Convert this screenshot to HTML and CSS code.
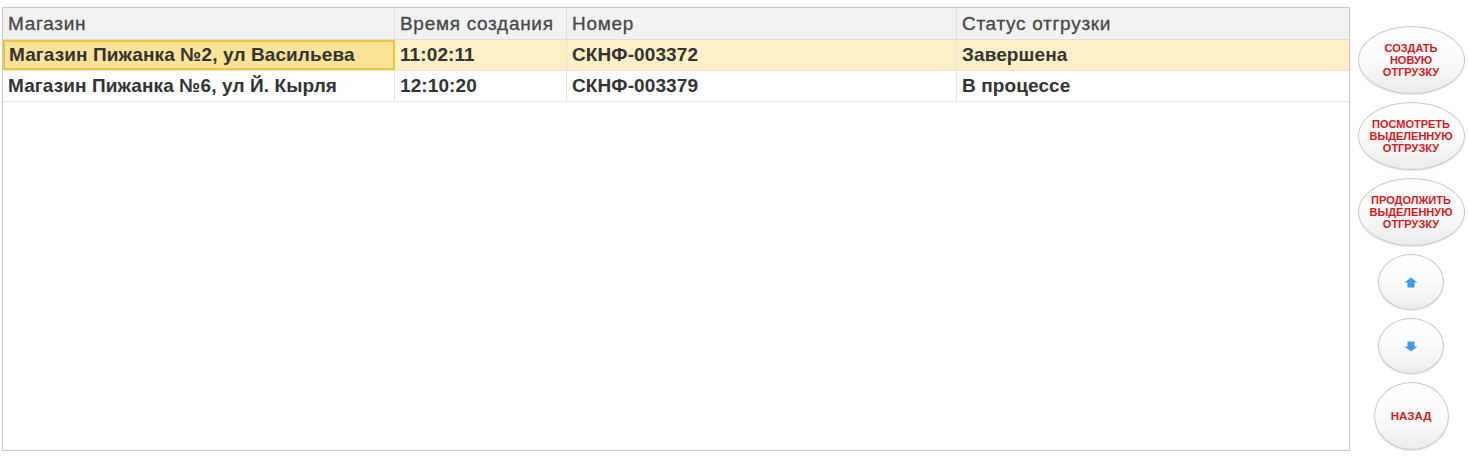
FILE: index.html
```html
<!DOCTYPE html>
<html lang="ru">
<head>
<meta charset="utf-8">
<link rel="stylesheet" href="styles.css">
</head>
<body>
<div class="page">
  <div class="grid">
    <div class="row head">
      <div class="cell c1">Магазин</div>
      <div class="cell c2">Время создания</div>
      <div class="cell c3">Номер</div>
      <div class="cell c4">Статус отгрузки</div>
    </div>
    <div class="row data selected">
      <div class="cell c1 focus">Магазин Пижанка №2, ул Васильева</div>
      <div class="cell c2">11:02:11</div>
      <div class="cell c3">СКНФ-003372</div>
      <div class="cell c4">Завершена</div>
    </div>
    <div class="row data">
      <div class="cell c1">Магазин Пижанка №6, ул Й. Кырля</div>
      <div class="cell c2">12:10:20</div>
      <div class="cell c3">СКНФ-003379</div>
      <div class="cell c4">В процессе</div>
    </div>
  </div>
  <div class="side">
    <button class="btn wide">СОЗДАТЬ<br>НОВУЮ<br>ОТГРУЗКУ</button>
    <button class="btn wide">ПОСМОТРЕТЬ<br>ВЫДЕЛЕННУЮ<br>ОТГРУЗКУ</button>
    <button class="btn wide">ПРОДОЛЖИТЬ<br>ВЫДЕЛЕННУЮ<br>ОТГРУЗКУ</button>
    <button class="btn arrow"><svg width="14" height="11" viewBox="0 0 14 11"><path d="M7 0.5 L13.5 5.5 L10.5 5.5 L10.5 10.5 L3.5 10.5 L3.5 5.5 L0.5 5.5 Z" fill="#3d9de0"/></svg></button>
    <button class="btn arrow"><svg width="14" height="11" viewBox="0 0 14 11"><path d="M7 10.5 L13.5 5.5 L10.5 5.5 L10.5 0.5 L3.5 0.5 L3.5 5.5 L0.5 5.5 Z" fill="#3d9de0"/></svg></button>
    <button class="btn back">НАЗАД</button>
  </div>
</div>
</body>
</html>
```
FILE: styles.css
```css
html, body {
  margin: 0;
  padding: 0;
  background: #fff;
  font-family: "Liberation Sans", Arial, sans-serif;
}
.page {
  display: flex;
  width: 1468px;
  height: 459px;
  box-sizing: border-box;
  padding: 7px 0 0 2px;
}
.grid {
  width: 1348px;
  height: 444px;
  box-sizing: border-box;
  border: 1px solid #c8c8c8;
  flex: none;
}
.row {
  display: flex;
  border-bottom: 1px solid #e6e6e6;
}
.head {
  height: 31px;
  background: #f2f2f2;
  color: #474747;
  font-size: 19px;
  letter-spacing: 0.7px;
  -webkit-text-stroke: 0.3px #474747;
  border-bottom: 1px solid #dedede;
}
.data {
  height: 30px;
  color: #333;
  font-size: 19px;
  letter-spacing: 0.1px;
  font-weight: bold;
}
.selected {
  background: #fdf0c6;
}
.cell {
  box-sizing: border-box;
  display: flex;
  align-items: center;
  padding-left: 5px;
  border-right: 1px solid #e4e4e4;
  white-space: nowrap;
  overflow: hidden;
}
.head .cell { border-right-color: #dcdcdc; }
.c1 { width: 392px; }
.c2 { width: 172px; }
.c3 { width: 390px; }
.c4 { width: 392px; border-right: none; }
.focus {
  background: #fbe397;
  border: 2px solid #f0c23a;
  padding-left: 4px;
}
.side {
  flex: 1;
  display: flex;
  flex-direction: column;
  align-items: center;
  padding-top: 19px;
  padding-left: 4px;
  gap: 8px;
}
.btn {
  border: 1px solid #c9c9c9;
  border-radius: 50%;
  background: linear-gradient(#ffffff 0%, #fbfbfb 50%, #ececec 100%);
  box-shadow: 0 1px 1px rgba(0,0,0,0.12);
  color: #d7191c;
  font-family: "Liberation Sans", Arial, sans-serif;
  font-weight: bold;
  font-size: 11px;
  line-height: 12px;
  padding: 0;
  display: flex;
  align-items: center;
  justify-content: center;
  text-align: center;
  box-sizing: border-box;
}
.wide {
  width: 107px;
  height: 68px;
}
.arrow {
  width: 66px;
  height: 56px;
}
.back {
  width: 75px;
  height: 68px;
  font-size: 11.5px;
}
```
